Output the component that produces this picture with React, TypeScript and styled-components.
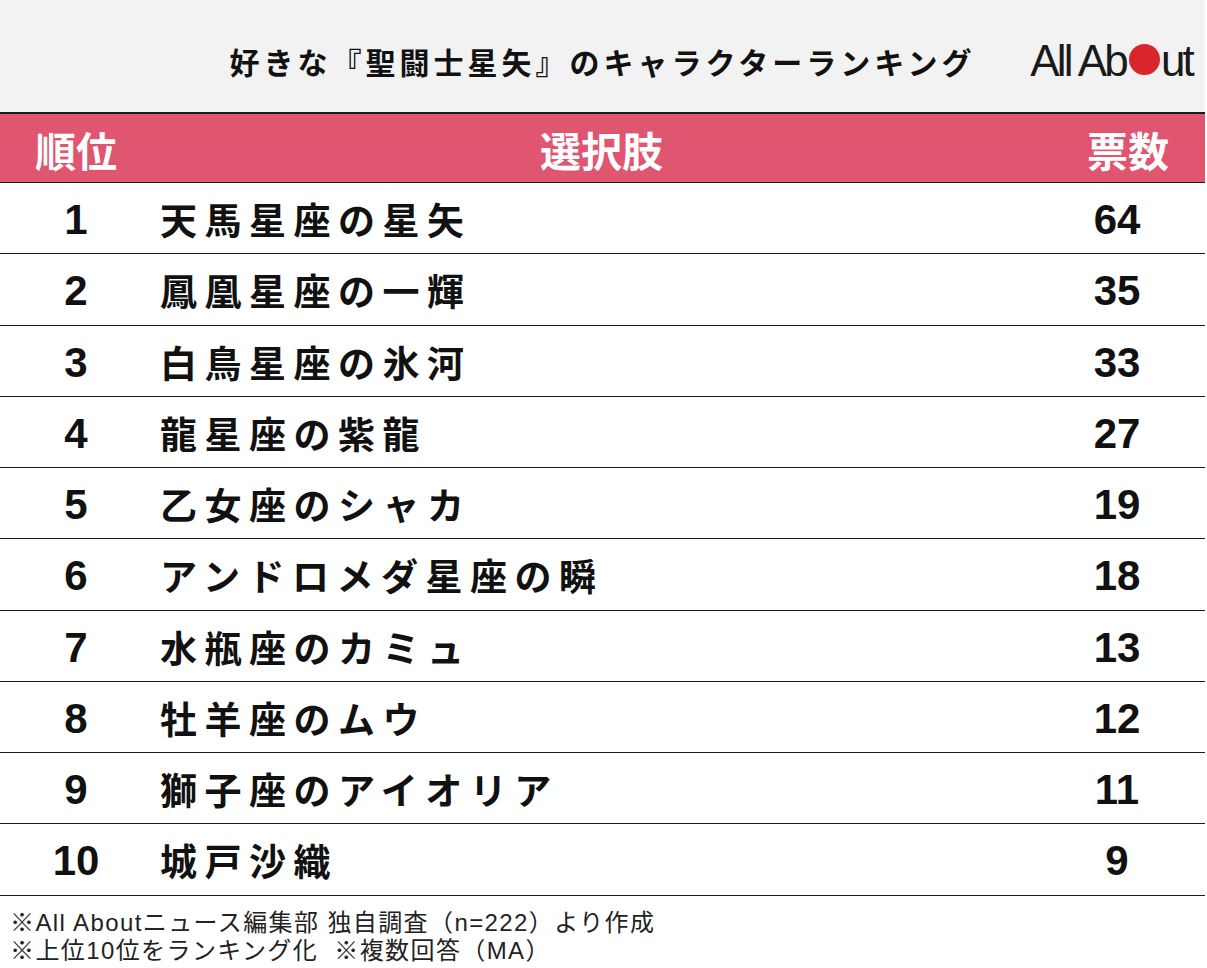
import React from 'react'
import styled, { createGlobalStyle } from 'styled-components'

const GlobalStyle = createGlobalStyle`
  body {
    margin: 0;
    background: #ffffff;
    font-family: 'Noto Sans CJK JP', 'Noto Sans', sans-serif;
    color: #111111;
  }
`

const Page = styled.div`
  width: 1205px;
`

const TitleBar = styled.header`
  display: grid;
  grid-template-columns: 1fr auto 1fr;
  align-items: center;
  height: 112px;
  background: #f2f2f2;
  padding-top: 10px;
  box-sizing: border-box;
`

const Title = styled.h1`
  grid-column: 2;
  margin: 0;
  font-size: 30px;
  font-weight: 700;
  letter-spacing: 4px;
  color: #111111;
  white-space: nowrap;
`

const Logo = styled.div`
  grid-column: 3;
  justify-self: end;
  margin-right: 13px;
  display: flex;
  align-items: flex-end;
  font-family: 'Liberation Sans', Arial, sans-serif;
  font-size: 44px;
  line-height: 1;
  letter-spacing: -2.8px;
  color: #1a1a1a;
`

const LogoDot = styled.span`
  display: inline-block;
  width: 31px;
  height: 31px;
  border-radius: 50%;
  background: #d9262c;
  margin: 0 1px 8px 3px;
`

const Row = styled.div<{ $head?: boolean }>`
  display: grid;
  grid-template-columns: 152px 1fr 154px;
  align-items: center;
  height: ${p => (p.$head ? '71px' : '71.25px')};
  box-sizing: border-box;
  border-bottom: 1.5px solid #1a1a1a;
  background: ${p => (p.$head ? '#e05570' : '#ffffff')};
  border-top: ${p => (p.$head ? '2px solid #1a1a1a' : 'none')};
`

const HeadCell = styled.div`
  color: #ffffff;
  font-size: 41px;
  font-weight: 700;
  text-align: center;
  padding-top: 2px;
`

const Rank = styled.div`
  text-align: center;
  font-family: 'Liberation Sans Narrow', 'Liberation Sans', Arial, sans-serif;
  font-size: 42px;
  font-weight: 700;
  padding-top: 4px;
`

const Name = styled.div`
  padding-left: 8px;
  padding-top: 2px;
  font-size: 37px;
  font-weight: 700;
  letter-spacing: 7.5px;
  white-space: nowrap;
`

const Votes = styled.div`
  text-align: center;
  padding-right: 22px;
  font-family: 'Liberation Sans Narrow', 'Liberation Sans', Arial, sans-serif;
  font-size: 42px;
  font-weight: 700;
  padding-top: 4px;
`

const Footer = styled.footer`
  padding: 13px 0 0 10px;
  font-family: 'Liberation Sans', 'Noto Sans CJK JP', sans-serif;
  font-size: 24px;
  line-height: 28px;
  color: #222222;
  letter-spacing: 1.4px;
`

const rows = [
  { rank: 1, name: '天馬星座の星矢', votes: 64 },
  { rank: 2, name: '鳳凰星座の一輝', votes: 35 },
  { rank: 3, name: '白鳥星座の氷河', votes: 33 },
  { rank: 4, name: '龍星座の紫龍', votes: 27 },
  { rank: 5, name: '乙女座のシャカ', votes: 19 },
  { rank: 6, name: 'アンドロメダ星座の瞬', votes: 18 },
  { rank: 7, name: '水瓶座のカミュ', votes: 13 },
  { rank: 8, name: '牡羊座のムウ', votes: 12 },
  { rank: 9, name: '獅子座のアイオリア', votes: 11 },
  { rank: 10, name: '城戸沙織', votes: 9 }
]

export default function App() {
  return (
    <Page>
      <GlobalStyle />
      <TitleBar>
        <Title>好きな『聖闘士星矢』のキャラクターランキング</Title>
        <Logo>
          <span>All Ab</span>
          <LogoDot />
          <span>ut</span>
        </Logo>
      </TitleBar>
      <Row $head>
        <HeadCell>順位</HeadCell>
        <HeadCell>選択肢</HeadCell>
        <HeadCell>票数</HeadCell>
      </Row>
      {rows.map(r => (
        <Row key={r.rank}>
          <Rank>{r.rank}</Rank>
          <Name>{r.name}</Name>
          <Votes>{r.votes}</Votes>
        </Row>
      ))}
      <Footer>
        <div>※All Aboutニュース編集部 独自調査（n=222）より作成</div>
        <div>※上位10位をランキング化&nbsp;&nbsp;※複数回答（MA）</div>
      </Footer>
    </Page>
  )
}
